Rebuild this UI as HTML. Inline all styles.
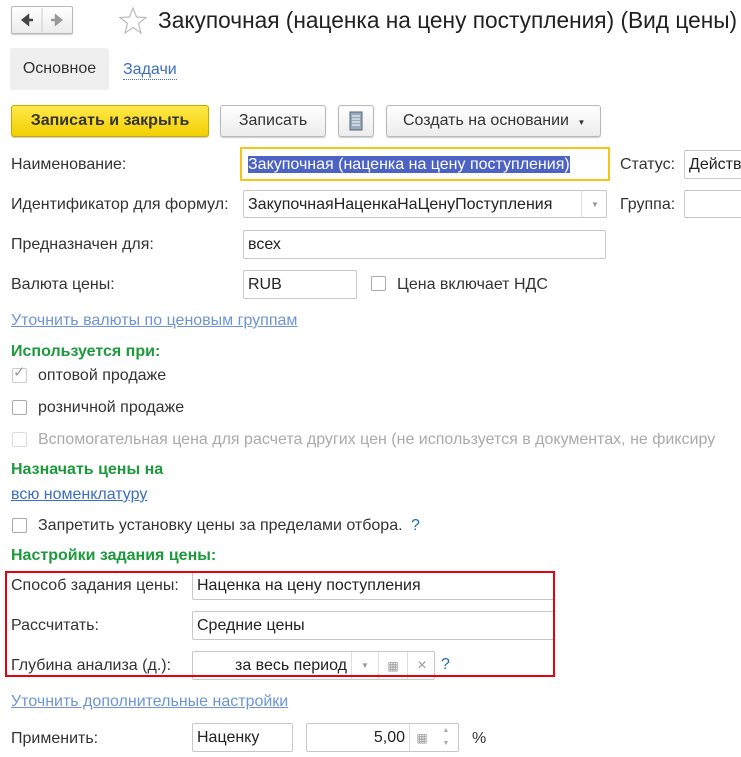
<!DOCTYPE html>
<html><head><meta charset="utf-8"><style>
body{margin:0;width:741px;height:757px;background:#fff;font-family:"Liberation Sans",Arial,sans-serif;font-size:16px;color:#333;position:relative;overflow:hidden}
.a{position:absolute;white-space:nowrap}
.in{position:absolute;border:1px solid #c8c8c8;border-radius:2px;background:#fff;height:26px;box-sizing:border-box;line-height:24px;padding-left:4px;white-space:nowrap;overflow:hidden;color:#222}
.btn{position:absolute;border:1px solid #b9b9b9;border-radius:3px;background:linear-gradient(#fff,#ececec);height:32px;box-sizing:border-box;line-height:30px;text-align:center;color:#333;box-shadow:0 1px 1px #ccc;white-space:nowrap}
.cb{position:absolute;width:15px;height:15px;border:1px solid #aaa;border-radius:2px;box-sizing:border-box;background:#fff}
.g{color:#1c9a3c;font-weight:bold}
.lnk{color:#4a7fc1;text-decoration:underline}
</style></head><body>
<div class="btn" style="left:11px;top:6px;width:62px;height:28px;border-radius:2px;padding:0">
<svg class="a" style="left:0;top:0" width="60" height="26" viewBox="0 0 60 26"><line x1="30" y1="1" x2="30" y2="25" stroke="#ccc"/><path d="M11 13h10M11 13l5-4v8z" stroke="#444" stroke-width="2.5" fill="#444"/><path d="M39 13h10M49 13l-5-4v8z" stroke="#999" stroke-width="2.5" fill="#999"/></svg></div>
<svg class="a" style="left:118px;top:6px" width="30" height="30" viewBox="0 0 30 30"><polygon points="15,2 18.5,11 28,11.5 20.5,17.5 23,27 15,21.5 7,27 9.5,17.5 2,11.5 11.5,11" fill="none" stroke="#bbb" stroke-width="1.2"/></svg>
<div class="a" style="left:158px;top:7px;font-size:22.7px;color:#222">Закупочная (наценка на цену поступления) (Вид цены)</div>
<div class="a" style="left:10px;top:48px;width:99px;height:42px;background:#efefef;border-radius:3px;line-height:42px;text-align:center;color:#333">Основное</div>
<div class="a" style="left:123px;top:60px;color:#3a6ec2;border-bottom:1px dotted #3a6ec2;line-height:19px">Задачи</div>
<div class="btn" style="left:11px;top:105px;width:198px;background:linear-gradient(#ffe94a,#f2cf00);border-color:#c9a800;font-weight:bold;color:#333">Записать и закрыть</div>
<div class="btn" style="left:220px;top:105px;width:106px">Записать</div>
<div class="btn" style="left:338px;top:105px;width:36px"><svg width="14" height="20" viewBox="0 0 14 20" style="margin-top:5px"><rect x="1" y="1" width="12" height="18" fill="#9ab" stroke="#567" /><path d="M3 5h8M3 8h8M3 11h8M3 14h8" stroke="#fff"/></svg></div>
<div class="btn" style="left:386px;top:105px;width:215px;text-align:left;padding-left:16px">Создать на основании <span style="font-size:8px;margin-left:4px">▼</span></div>

<div class="a" style="left:11px;top:156px">Наименование:</div>
<div class="in" style="left:240px;top:147px;width:370px;height:34px;border:2px solid #f5c518;border-radius:0;line-height:31px;padding-left:6px"><span style="background:#4c63c4;color:#fff">Закупочная (наценка на цену поступления)</span></div>
<div class="a" style="left:620px;top:156px">Статус:</div>
<div class="in" style="left:684px;top:150px;width:70px;height:29px;line-height:28px">Действ</div>

<div class="a" style="left:11px;top:196px">Идентификатор для формул:</div>
<div class="in" style="left:243px;top:190px;width:364px;height:28px;line-height:27px">ЗакупочнаяНаценкаНаЦенуПоступления<span style="position:absolute;left:337px;top:0;width:26px;height:26px;border-left:1px solid #ddd;text-align:center;font-size:8px;color:#999">▼</span></div>
<div class="a" style="left:620px;top:196px">Группа:</div>
<div class="in" style="left:684px;top:190px;width:70px;height:28px"></div>

<div class="a" style="left:11px;top:236px">Предназначен для:</div>
<div class="in" style="left:243px;top:230px;width:363px;height:29px;line-height:28px">всех</div>

<div class="a" style="left:11px;top:276px">Валюта цены:</div>
<div class="in" style="left:243px;top:270px;width:114px;height:29px;line-height:28px">RUB</div>
<div class="cb" style="left:371px;top:276px"></div>
<div class="a" style="left:397px;top:276px">Цена включает НДС</div>

<div class="a lnk" style="left:11px;top:312px;color:#6d94d6">Уточнить валюты по ценовым группам</div>
<div class="a g" style="left:11px;top:343px">Используется при:</div>
<div class="cb" style="left:12px;top:368px;border-color:#ccc"></div><div class="a" style="left:13px;top:363px;color:#999;font-size:15px">✓</div>
<div class="a" style="left:38px;top:367px">оптовой продаже</div>
<div class="cb" style="left:12px;top:400px"></div>
<div class="a" style="left:38px;top:399px">розничной продаже</div>
<div class="cb" style="left:12px;top:432px;border-color:#ddd"></div>
<div class="a" style="left:38px;top:431px;color:#aaa">Вспомогательная цена для расчета других цен (не используется в документах, не фиксиру</div>
<div class="a g" style="left:11px;top:461px">Назначать цены на</div>
<div class="a lnk" style="left:11px;top:486px;color:#3a6ec2">всю номенклатуру</div>
<div class="cb" style="left:12px;top:518px"></div>
<div class="a" style="left:38px;top:517px">Запретить установку цены за пределами отбора. <span style="color:#1a6bb5;margin-left:4px">?</span></div>
<div class="a g" style="left:11px;top:547px">Настройки задания цены:</div>

<div class="a" style="left:11px;top:577px">Способ задания цены:</div>
<div class="in" style="left:192px;top:571px;width:362px;height:29px;line-height:28px;border-right:none">Наценка на цену поступления</div>
<div class="a" style="left:11px;top:617px">Рассчитать:</div>
<div class="in" style="left:192px;top:611px;width:362px;height:29px;line-height:28px;border-right:none">Средние цены</div>
<div class="a" style="left:11px;top:657px">Глубина анализа (д.):</div>
<div class="in" style="left:192px;top:651px;width:243px;height:29px;line-height:28px;padding-left:42px">за весь период
<span style="position:absolute;left:158px;top:0;width:26px;height:27px;border-left:1px solid #ddd;text-align:center;font-size:8px;color:#999;padding:0">▼</span>
<span style="position:absolute;left:185px;top:0;width:28px;height:27px;border-left:1px solid #ddd;text-align:center;color:#999;font-size:12px">▦</span>
<span style="position:absolute;left:214px;top:0;width:28px;height:27px;border-left:1px solid #ddd;text-align:center;color:#999">×</span></div>
<div class="a" style="left:441px;top:656px;color:#1a6bb5">?</div>
<div class="a" style="left:5px;top:571px;width:550px;height:106px;border:2px solid #e8000b;box-sizing:border-box;z-index:5"></div>

<div class="a lnk" style="left:11px;top:693px;color:#6d94d6">Уточнить дополнительные настройки</div>
<div class="a" style="left:11px;top:730px">Применить:</div>
<div class="in" style="left:192px;top:723px;width:101px;height:29px;line-height:28px">Наценку</div>
<div class="in" style="left:306px;top:723px;width:153px;height:29px;line-height:28px;text-align:right;padding-right:53px">5,00
<span style="position:absolute;left:102px;top:0;width:24px;height:27px;border-left:1px solid #ddd;text-align:center;color:#999;font-size:12px">▦</span>
<span style="position:absolute;left:127px;top:0;width:24px;height:27px;text-align:center;color:#aaa;font-size:7px;line-height:13px">▲<br>▼</span></div>
<div class="a" style="left:472px;top:730px">%</div>
</body></html>
